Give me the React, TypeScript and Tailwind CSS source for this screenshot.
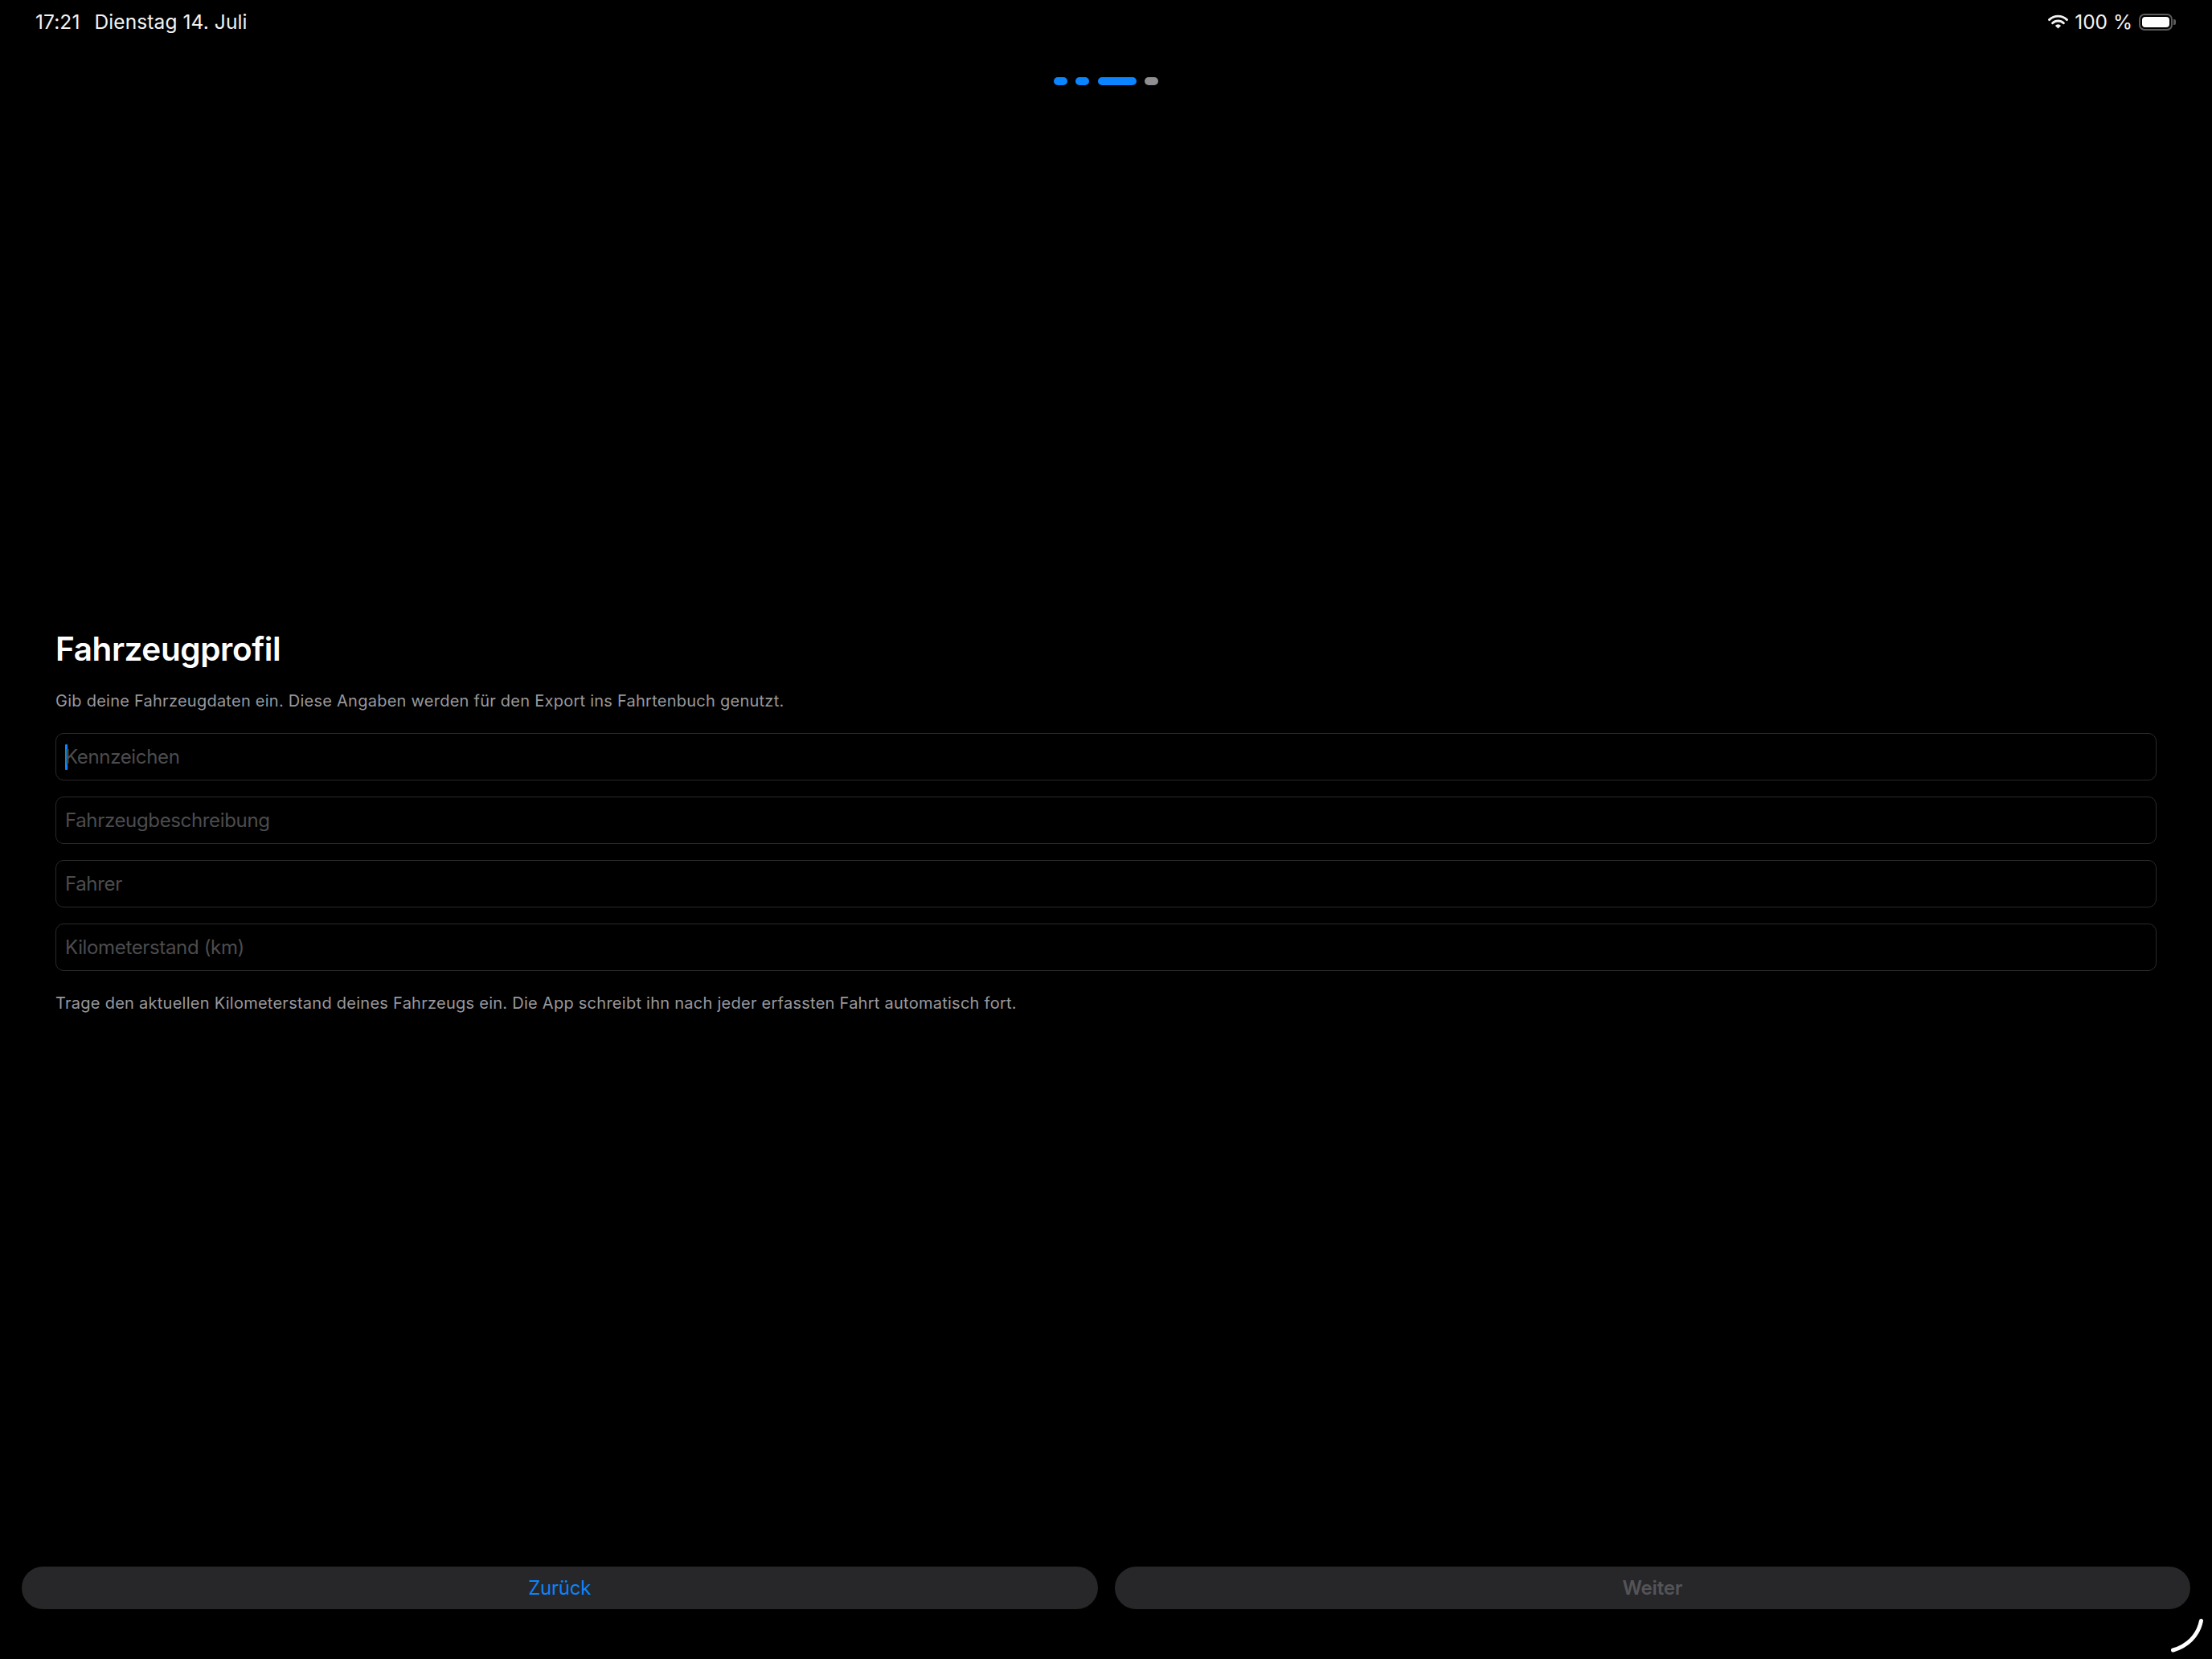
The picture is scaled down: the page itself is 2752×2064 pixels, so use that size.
const font = { fontFamily: '"Inter", "Liberation Sans", sans-serif' };

function Field({ label, caret }: { label: string; caret?: boolean }) {
  return (
    <div className="flex h-[59px] items-center rounded-[10px] border border-[#2a2a2c] pl-[11px]">
      {caret && <span className="mr-[-3px] h-[32px] w-[3px] shrink-0 rounded-[1px] bg-[#0a84ff]" />}
      <span className="text-[24px] leading-none tracking-[-0.35px] text-[#4c4c4e]">{label}</span>
    </div>
  );
}

export default function App() {
  return (
    <div className="relative flex h-[2064px] w-[2752px] flex-col bg-black text-white" style={font}>
      <div className="flex h-[54px] items-center justify-between pl-[44px] pr-[45px] text-[24.5px] text-[#f2f2f2]">
        <div className="flex gap-[18px] tracking-[0.1px]">
          <span>17:21</span>
          <span>Dienstag 14. Juli</span>
        </div>
        <div className="flex items-center gap-[8px]">
          <svg width="25" height="18" viewBox="0 0 25 18" fill="none">
            <path d="M1.500 6.600a15.800 15.800 0 0 1 22 0" stroke="#f2f2f2" strokeWidth="2.900" strokeLinecap="round" />
            <path d="M5.600 10.700a10 10 0 0 1 13.800 0" stroke="#f2f2f2" strokeWidth="2.900" strokeLinecap="round" />
            <path d="M12.500 17.600 8.900 13.900a5 5 0 0 1 7.200 0z" fill="#f2f2f2" />
          </svg>
          <span>100 %</span>
          <div className="flex items-center gap-[1px]">
            <div className="flex h-[21px] w-[42px] rounded-[7px] border-2 border-[#5c5c5e] p-[2px]">
              <div className="flex-1 rounded-[4px] bg-white" />
            </div>
            <div className="h-[7px] w-[3px] rounded-r-[2px] bg-[#5c5c5e]" />
          </div>
        </div>
      </div>

      <div className="mt-[42px] flex justify-center gap-[10.5px]">
        <div className="h-[10px] w-[17px] rounded-full bg-[#0a84ff]" />
        <div className="h-[10px] w-[17px] rounded-full bg-[#0a84ff]" />
        <div className="h-[10px] w-[48px] rounded-full bg-[#0a84ff]" />
        <div className="h-[10px] w-[17px] rounded-full bg-[#8e8e93]" />
      </div>

      <div className="mt-[677px] flex flex-col px-[69px]">
        <h1 className="text-[40.5px] font-semibold leading-[50px] tracking-[-0.4px] text-white">Fahrzeugprofil</h1>
        <p className="mt-[26px] text-[20px] leading-[26px] tracking-[0.25px] text-[#98989d]">
          Gib deine Fahrzeugdaten ein. Diese Angaben werden für den Export ins Fahrtenbuch genutzt.
        </p>
        <div className="mt-[27px] flex flex-col gap-[20px]">
          <Field label="Kennzeichen" caret />
          <Field label="Fahrzeugbeschreibung" />
          <Field label="Fahrer" />
          <Field label="Kilometerstand (km)" />
        </div>
        <p className="mt-[27px] text-[20px] leading-[26px] tracking-[0.26px] text-[#98989d]">
          Trage den aktuellen Kilometerstand deines Fahrzeugs ein. Die App schreibt ihn nach jeder erfassten Fahrt automatisch fort.
        </p>
      </div>

      <div className="mt-auto mb-[62px] flex gap-[21px] px-[27px]">
        <div className="flex h-[53px] flex-1 items-center justify-center rounded-full bg-[#272729] text-[24px] tracking-[-0.2px] text-[#0a84ff]">Zurück</div>
        <div className="flex h-[53px] flex-1 items-center justify-center rounded-full bg-[#272729] text-[24px] font-semibold tracking-[-0.2px] text-[#545458]">Weiter</div>
      </div>

      <svg className="absolute left-[2698px] top-[2010px]" width="48" height="48" viewBox="0 0 48 48" fill="none">
        <path d="M5.500 43c17-5 31-17 35-36.500" stroke="#fff" strokeWidth="5" strokeLinecap="round" />
      </svg>
    </div>
  );
}
